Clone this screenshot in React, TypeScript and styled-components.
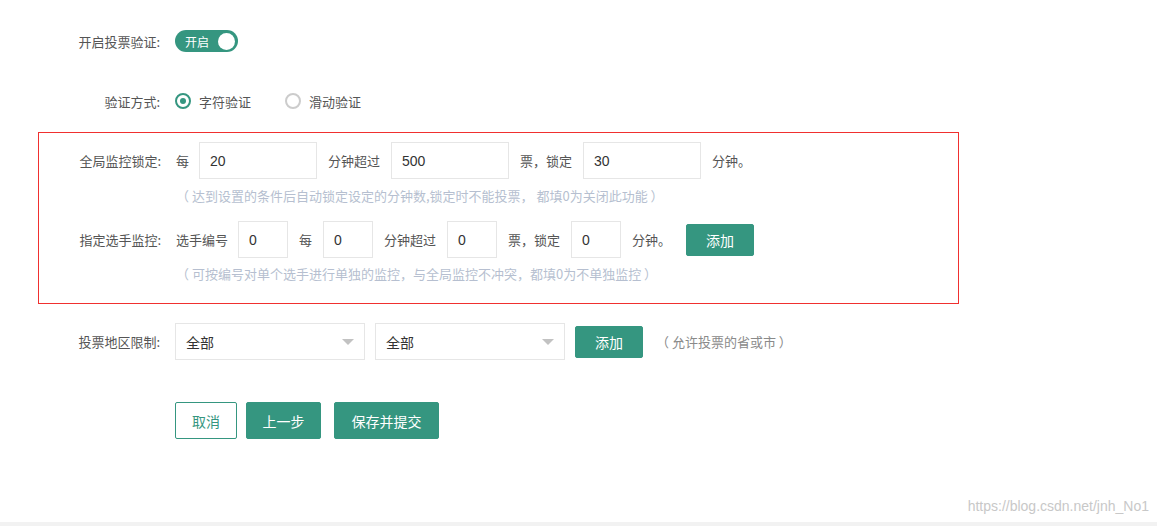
import styled, { createGlobalStyle } from "styled-components";

const GREEN = "#359680";

const Global = createGlobalStyle`
  body {
    margin: 0;
    background: #fff;
    font-family: "Microsoft YaHei", "Noto Sans CJK SC", "Liberation Sans", sans-serif;
    font-size: 13px;
    color: #555;
  }
`;

const Page = styled.div`
  position: relative;
  width: 1157px;
  height: 526px;
  padding-top: 30px;
  box-sizing: border-box;
  border-bottom: 4px solid #f2f2f2;
`;

const Row = styled.div<{ $h: number; $mt?: number }>`
  display: flex;
  align-items: center;
  height: ${(p) => p.$h}px;
  margin-top: ${(p) => p.$mt ?? 0}px;
  padding-left: 40px;
`;

const Label = styled.div`
  width: 120px;
  text-align: right;
  padding-right: 15px;
  flex-shrink: 0;
`;

const Content = styled.div<{ $gap?: number }>`
  display: flex;
  align-items: center;
`;

const Text = styled.span<{ $ml?: number; $mr?: number }>`
  margin-left: ${(p) => p.$ml ?? 0}px;
  margin-right: ${(p) => p.$mr ?? 0}px;
  white-space: nowrap;
`;

const Hint = styled.div`
  padding-left: 175px;
  color: #b6bfd0;
  font-size: 13px;
  height: 22px;
  line-height: 22px;
`;

const Toggle = styled.div`
  width: 63px;
  height: 22px;
  border-radius: 11px;
  background: ${GREEN};
  color: #fff;
  font-size: 12px;
  display: flex;
  align-items: center;
  justify-content: space-between;
  padding: 0 3px 0 10px;
  box-sizing: border-box;
`;

const Knob = styled.span`
  width: 17px;
  height: 17px;
  border-radius: 50%;
  background: #fff;
`;

const Radio = styled.span<{ $on?: boolean }>`
  width: 16px;
  height: 16px;
  border-radius: 50%;
  border: 2px solid ${(p) => (p.$on ? GREEN : "#ccc")};
  box-sizing: border-box;
  display: inline-flex;
  align-items: center;
  justify-content: center;
  margin-right: 8px;
  &::after {
    content: "";
    width: 6px;
    height: 6px;
    border-radius: 50%;
    background: ${(p) => (p.$on ? GREEN : "transparent")};
  }
`;

const RadioItem = styled.label<{ $mr?: number }>`
  display: flex;
  align-items: center;
  margin-right: ${(p) => p.$mr ?? 0}px;
`;

const Box = styled.div`
  margin: 20px 0 0 38px;
  width: 921px;
  height: 172px;
  border: 1px solid #f0302f;
  box-sizing: border-box;
  padding-top: 9px;
  margin-left: 38px;
  & > * { margin-left: -38px; }
`;

const Input = styled.div<{ $w: number }>`
  width: ${(p) => p.$w}px;
  height: 37px;
  border: 1px solid #e6e6e6;
  box-sizing: border-box;
  padding-left: 10px;
  display: flex;
  align-items: center;
  color: #333;
  font-size: 14px;
  font-family: "Liberation Sans", "Noto Sans CJK SC", sans-serif;
`;

const Select = styled(Input)`
  justify-content: space-between;
  padding-right: 10px;
  font-family: "Microsoft YaHei", "Noto Sans CJK SC", sans-serif;
`;

const Caret = styled.span`
  width: 0;
  height: 0;
  border-left: 6px solid transparent;
  border-right: 6px solid transparent;
  border-top: 6px solid #c2c2c2;
`;

const Button = styled.button<{ $w: number; $h?: number; $outline?: boolean; $ml?: number }>`
  width: ${(p) => p.$w}px;
  height: ${(p) => p.$h ?? 37}px;
  margin-left: ${(p) => p.$ml ?? 0}px;
  background: ${(p) => (p.$outline ? "#fff" : GREEN)};
  color: ${(p) => (p.$outline ? GREEN : "#fff")};
  border: 1px solid ${GREEN};
  border-radius: 2px;
  font-size: 14px;
  font-family: inherit;
  padding: 0;
`;

const Watermark = styled.div`
  position: absolute;
  right: 8px;
  bottom: 8px;
  color: #c8c8c8;
  font-size: 14px;
  font-family: "Liberation Sans", sans-serif;
`;

export default function App() {
  return (
    <Page>
      <Global />
      <Row $h={22}>
        <Label>开启投票验证:</Label>
        <Toggle>开启<Knob /></Toggle>
      </Row>
      <Row $h={22} $mt={38}>
        <Label>验证方式:</Label>
        <RadioItem $mr={34}><Radio $on />字符验证</RadioItem>
        <RadioItem><Radio />滑动验证</RadioItem>
      </Row>
      <Box>
        <Row $h={37}>
          <Label>全局监控锁定:</Label>
          <Content>
            <Text $mr={10}>每</Text>
            <Input $w={118}>20</Input>
            <Text $ml={11} $mr={11}>分钟超过</Text>
            <Input $w={118}>500</Input>
            <Text $ml={11} $mr={11}>票，锁定</Text>
            <Input $w={118}>30</Input>
            <Text $ml={11}>分钟。</Text>
          </Content>
        </Row>
        <Hint style={{ marginTop: 6 }}>（ 达到设置的条件后自动锁定设定的分钟数,锁定时不能投票， 都填0为关闭此功能 ）</Hint>
        <Row $h={37} $mt={14}>
          <Label>指定选手监控:</Label>
          <Content>
            <Text $mr={10}>选手编号</Text>
            <Input $w={50}>0</Input>
            <Text $ml={11} $mr={11}>每</Text>
            <Input $w={50}>0</Input>
            <Text $ml={11} $mr={11}>分钟超过</Text>
            <Input $w={50}>0</Input>
            <Text $ml={11} $mr={11}>票，锁定</Text>
            <Input $w={50}>0</Input>
            <Text $ml={11}>分钟。</Text>
            <Button $w={68} $h={32} $ml={15}>添加</Button>
          </Content>
        </Row>
        <Hint style={{ marginTop: 5 }}>（ 可按编号对单个选手进行单独的监控，与全局监控不冲突，都填0为不单独监控 ）</Hint>
      </Box>
      <Row $h={37} $mt={19}>
        <Label>投票地区限制:</Label>
        <Content>
          <Select $w={190}>全部<Caret /></Select>
          <Select $w={190} style={{ marginLeft: 10 }}>全部<Caret /></Select>
          <Button $w={68} $h={32} $ml={10}>添加</Button>
          <Text $ml={13} style={{ color: "#8a8a8a" }}>（ 允许投票的省或市 ）</Text>
        </Content>
      </Row>
      <Row $h={37} $mt={42}>
        <Label />
        <Button $w={62} $outline>取消</Button>
        <Button $w={75} $ml={9}>上一步</Button>
        <Button $w={105} $ml={13}>保存并提交</Button>
      </Row>
      <Watermark>https://blog.csdn.net/jnh_No1</Watermark>
    </Page>
  );
}
